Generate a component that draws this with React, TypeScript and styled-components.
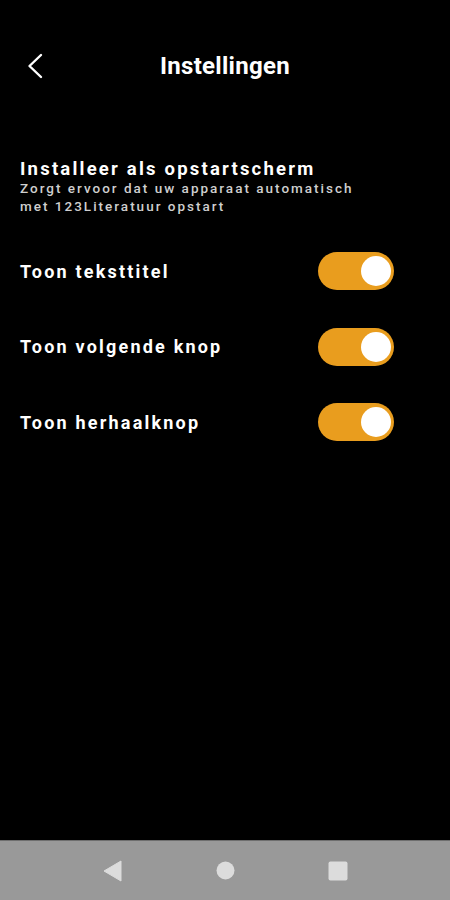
import styled, { createGlobalStyle } from "styled-components";

const GlobalStyle = createGlobalStyle`
  html, body {
    margin: 0;
    padding: 0;
    background: #000;
  }
  #root {
    height: 900px;
  }
  * {
    box-sizing: border-box;
  }
`;

const Screen = styled.div`
  height: 900px;
  width: 450px;
  display: flex;
  flex-direction: column;
  background: #000;
  font-family: Roboto, "Noto Sans", sans-serif;
  color: #fff;
`;

const Content = styled.div`
  flex: 1;
  display: flex;
  flex-direction: column;
`;

const Header = styled.header`
  height: 52px;
  margin-top: 40px;
  display: grid;
  grid-template-columns: 60px 1fr 60px;
  align-items: center;
`;

const BackButton = styled.button`
  background: none;
  border: none;
  padding: 0 0 0 26px;
  height: 100%;
  display: flex;
  align-items: center;
  cursor: pointer;
`;

const Title = styled.h1`
  margin: 0;
  text-align: center;
  font-size: 24px;
  line-height: 28px;
  font-weight: 700;
  letter-spacing: 0.3px;
`;

const Section = styled.section`
  padding: 67px 20px 0;
`;

const SectionTitle = styled.h2`
  margin: 0;
  font-size: 18.5px;
  font-weight: 700;
  letter-spacing: 2.2px;
  line-height: 20px;
`;

const SectionText = styled.p`
  margin: 0;
  font-size: 13.5px;
  font-weight: 500;
  line-height: 18px;
  letter-spacing: 2px;
  color: #cfcfcf;
`;

const List = styled.div`
  display: flex;
  flex-direction: column;
  gap: 37.5px;
  padding: 37px 56px 0 20px;
`;

const Row = styled.div`
  display: flex;
  align-items: center;
  justify-content: space-between;
  height: 38px;
`;

const Label = styled.span`
  font-size: 18px;
  font-weight: 700;
  letter-spacing: 2.2px;
`;

const Track = styled.button<{ $on: boolean }>`
  width: 76px;
  height: 38px;
  border: none;
  border-radius: 19px;
  padding: 0 3px;
  display: flex;
  align-items: center;
  justify-content: ${(p) => (p.$on ? "flex-end" : "flex-start")};
  background: ${(p) => (p.$on ? "#e99d1e" : "#555")};
  cursor: pointer;
`;

const Thumb = styled.span`
  width: 30px;
  height: 30px;
  border-radius: 50%;
  background: #fff;
`;

const NavBar = styled.nav`
  height: 60px;
  background: #999;
  border-top: 1px solid #6e6e6e;
  display: flex;
  align-items: center;
  justify-content: center;
  gap: 93px;
`;

const NavIcon = styled.div`
  width: 20px;
  height: 20px;
  display: flex;
  align-items: center;
  justify-content: center;
`;

const settings = [
  { id: "title", label: "Toon teksttitel", on: true },
  { id: "next", label: "Toon volgende knop", on: true },
  { id: "repeat", label: "Toon herhaalknop", on: true },
];

const App = () => {
  return (
    <>
      <GlobalStyle />
      <Screen>
        <Content>
          <Header>
            <BackButton type="button" aria-label="Terug">
              <svg width="18" height="26" viewBox="0 0 18 26">
                <path
                  d="M15 2 L3.5 13 L15 24"
                  fill="none"
                  stroke="#fff"
                  strokeWidth="2.4"
                  strokeLinecap="round"
                  strokeLinejoin="round"
                />
              </svg>
            </BackButton>
            <Title>Instellingen</Title>
            <span />
          </Header>
          <Section>
            <SectionTitle>Installeer als opstartscherm</SectionTitle>
            <SectionText>
              Zorgt ervoor dat uw apparaat automatisch
              <br />
              met 123Literatuur opstart
            </SectionText>
          </Section>
          <List>
            {settings.map((s) => (
              <Row key={s.id}>
                <Label>{s.label}</Label>
                <Track type="button" $on={s.on} aria-label={s.label}>
                  <Thumb />
                </Track>
              </Row>
            ))}
          </List>
        </Content>
        <NavBar>
          <NavIcon>
            <svg width="19" height="22" viewBox="0 0 19 22">
              <path d="M18 1 L18 21 L1 11 Z" fill="#dcdcdc" strokeLinejoin="round" stroke="#dcdcdc" strokeWidth="1" />
            </svg>
          </NavIcon>
          <NavIcon>
            <svg width="19" height="19" viewBox="0 0 19 19">
              <circle cx="9.5" cy="9.5" r="9" fill="#dcdcdc" />
            </svg>
          </NavIcon>
          <NavIcon>
            <svg width="20" height="20" viewBox="0 0 20 20">
              <rect x="0.5" y="0.5" width="19" height="19" rx="2" fill="#dcdcdc" />
            </svg>
          </NavIcon>
        </NavBar>
      </Screen>
    </>
  );
};

export default App;
